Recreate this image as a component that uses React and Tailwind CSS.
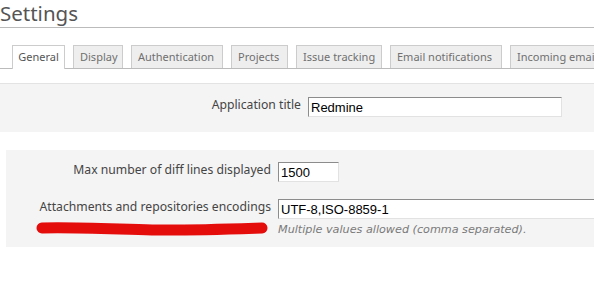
import React from "react";

const tabs = [
  { name: "General", w: 53 },
  { name: "Display", w: 50 },
  { name: "Authentication", w: 92 },
  { name: "Projects", w: 57 },
  { name: "Issue tracking", w: 86 },
  { name: "Email notifications", w: 112 },
  { name: "Incoming emails", w: 100 },
];

const inputCls =
  "h-[20px] bg-white border border-t-[#8c8c8c] border-l-[#8c8c8c] border-b-[#e2e2e2] border-r-[#e2e2e2] pl-[2px] text-[13px] leading-[18px] text-black font-['Liberation_Sans',Arial,sans-serif] outline-none";

const Field = ({ label, labelWidth, value, inputWidth }) => {
  return (
    <div className="flex items-start">
      <label
        className="shrink-0 text-right text-[12.2px] leading-[16px] text-[#444] pr-[7px] whitespace-nowrap"
        style={{ width: labelWidth }}
      >
        {label}
      </label>
      <input
        type="text"
        defaultValue={value}
        className={`${inputCls} shrink-0`}
        style={{ width: inputWidth }}
      />
    </div>
  );
};

const App = () => {
  return (
    <div className="relative w-[594px] h-[284px] overflow-hidden bg-white font-['Noto_Sans',sans-serif]">
      <h2 className="h-[28px] border-b border-[#bbbbbb] pt-[1px] text-[20.5px] leading-[25px] text-[#555]">
        Settings
      </h2>

      {/* tab bar */}
      <div className="mt-[17px] flex items-end gap-2 pl-3 border-b border-[#bbbbbb] whitespace-nowrap">
        {tabs.map((t, i) => (
          <div
            key={t.name}
            style={{ width: t.w }}
            className={
              i === 0
                ? "shrink-0 h-[24px] -mb-px text-center border border-b-0 border-[#cccccc] bg-white text-[11px] leading-[22px] text-[#555]"
                : "shrink-0 h-[23px] pl-[6px] text-left border border-b-0 border-[#cccccc] bg-[#eeeeee] text-[11px] leading-[22px] text-[#707070]"
            }
          >
            {t.name}
          </div>
        ))}
      </div>

      {/* first box */}
      <div className="mt-[14px] bg-[#f4f4f4] border-t border-[#e3e3e3] pt-[13px] pb-[15px]">
        <Field
          label="Application title"
          labelWidth={308}
          value="Redmine"
          inputWidth={254}
        />
      </div>

      {/* second box */}
      <div className="mt-[18px] ml-[6px] bg-[#f4f4f4] pt-[12px] pb-[9px]">
        <Field
          label="Max number of diff lines displayed"
          labelWidth={272}
          value="1500"
          inputWidth={61}
        />
        <div className="mt-[17px]">
          <Field
            label="Attachments and repositories encodings"
            labelWidth={272}
            value="UTF-8,ISO-8859-1"
            inputWidth={340}
          />
        </div>
        <p className="pl-[272px] pt-[3px] text-[11.2px] leading-[16px] italic text-[#7a7a7a] font-['DejaVu_Sans',sans-serif] whitespace-nowrap">
          Multiple values allowed (comma separated).
        </p>
      </div>

      {/* red marker stroke */}
      <svg
        className="absolute left-[32px] top-[217px]"
        width="242"
        height="22"
        viewBox="0 0 242 22"
      >
        <path
          d="M10 11 C 40 10, 80 12, 120 13 C 160 13.5, 200 12, 230 11"
          stroke="#e50c0c"
          strokeWidth="11"
          strokeLinecap="round"
          fill="none"
        />
      </svg>
    </div>
  );
};

export default App;
